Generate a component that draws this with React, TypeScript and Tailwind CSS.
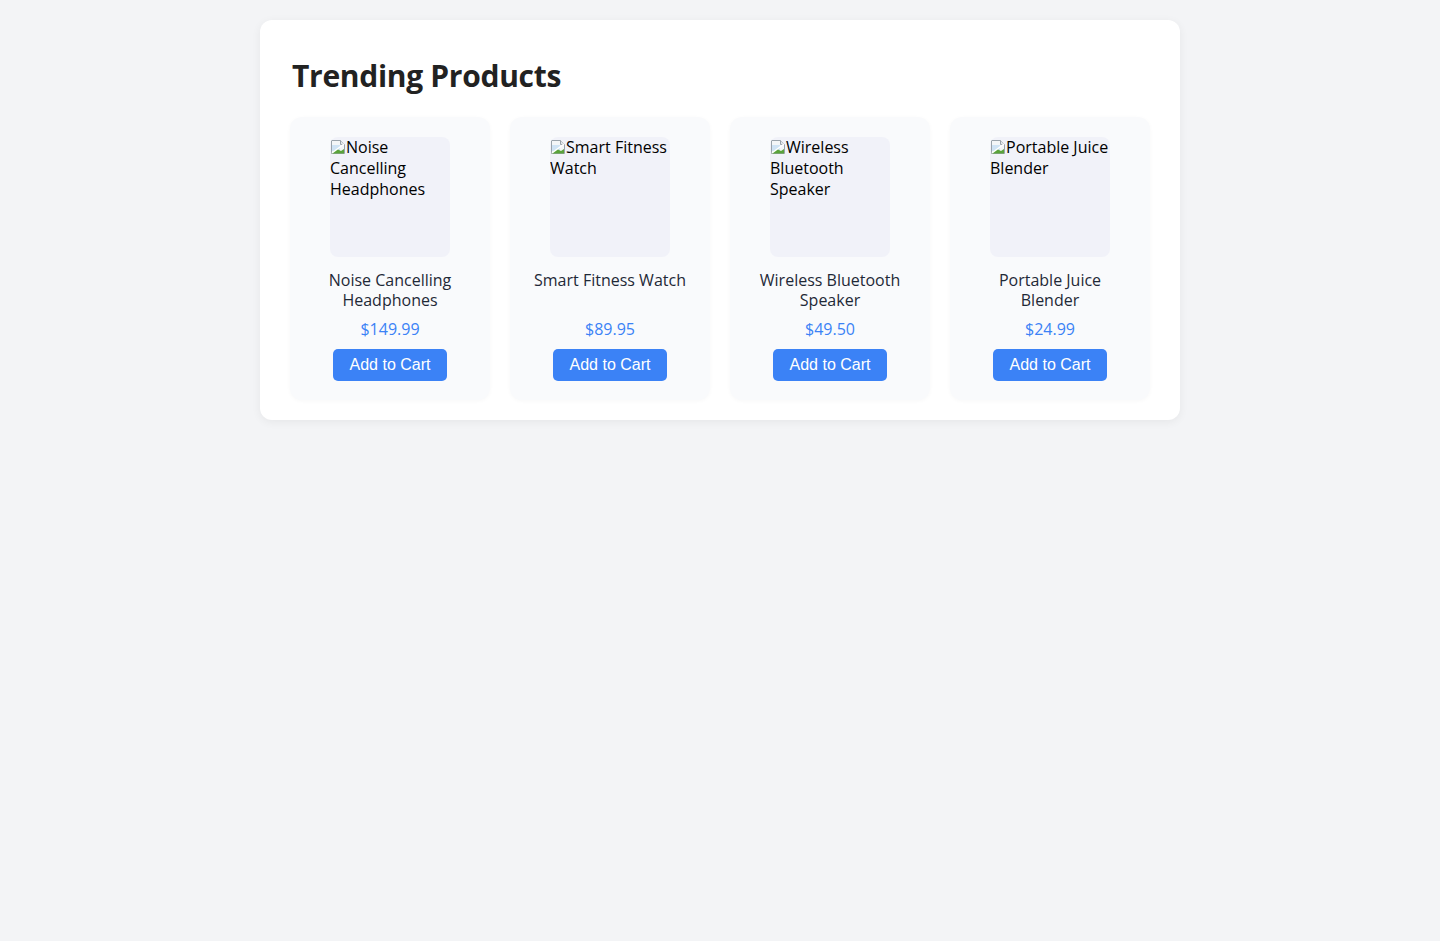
const products = [
  { name: 'Noise Cancelling Headphones', price: '$149.99' },
  { name: 'Smart Fitness Watch', price: '$89.95' },
  { name: 'Wireless Bluetooth Speaker', price: '$49.50' },
  { name: 'Portable Juice Blender', price: '$24.99' },
]

function BrokenImage() {
  return (
    <svg width="16" height="16" viewBox="0 0 16 16" className="inline-block align-[-2px]">
      <path d="M1.5 1.5h9l4 4v9h-13z" fill="#f4f6f8" stroke="#9aa3ab" />
      <path d="M10.5 1.5v4h4" fill="#e2e6ea" stroke="#9aa3ab" />
      <path d="M2 6h8v6H2z" fill="#cfe3f5" />
      <path d="M2 14l5-4 4 2 3-2v4.5H2z" fill="#5aa33c" />
      <path d="M14 5l-12 9" stroke="#ffffff" strokeWidth="1.5" />
    </svg>
  )
}

function ProductCard({ name, price }: { name: string; price: string }) {
  return (
    <div className="flex flex-col items-center rounded-xl bg-[#f9fafc] px-5 pt-5 pb-[19px] text-center shadow-[0_1px_4px_rgba(0,0,0,0.03)]">
      {/* image failed to load, alt text shows */}
      <div className="h-[120px] w-[120px] overflow-hidden rounded-lg bg-[#f1f2f9] text-left text-[16px] leading-[21px] text-black">
        <BrokenImage />
        {name}
      </div>
      <h3 className="mt-[13px] h-[42px] text-[16px] leading-[20px] text-[#1f2937]">{name}</h3>
      <p className="mt-[6px] h-[22px] text-[16px] leading-[22px] text-[#3b82f6]">{price}</p>
      <button className="mt-[9px] h-8 w-[114px] rounded-[5px] bg-[#3b82f6] text-[16px] text-white [font-family:'Liberation_Sans',Arial,sans-serif]">
        Add to Cart
      </button>
    </div>
  )
}

export default function App() {
  return (
    <div className="min-h-screen bg-[#f3f4f6] pt-5 [font-family:'Open_Sans','Noto_Sans',sans-serif]">
      <div className="mx-auto w-[920px] rounded-xl bg-white px-[30px] pt-[30px] pb-5 shadow-[0_2px_10px_rgba(0,0,0,0.06)]">
        <h2 className="mt-1 h-[43px] pl-[2px] text-[30px] leading-[43px] font-bold tracking-[-0.3px] text-[#222]">Trending Products</h2>
        <div className="mt-5 grid grid-cols-4 gap-5">
          {products.map((p) => (
            <ProductCard key={p.name} {...p} />
          ))}
        </div>
      </div>
    </div>
  )
}
